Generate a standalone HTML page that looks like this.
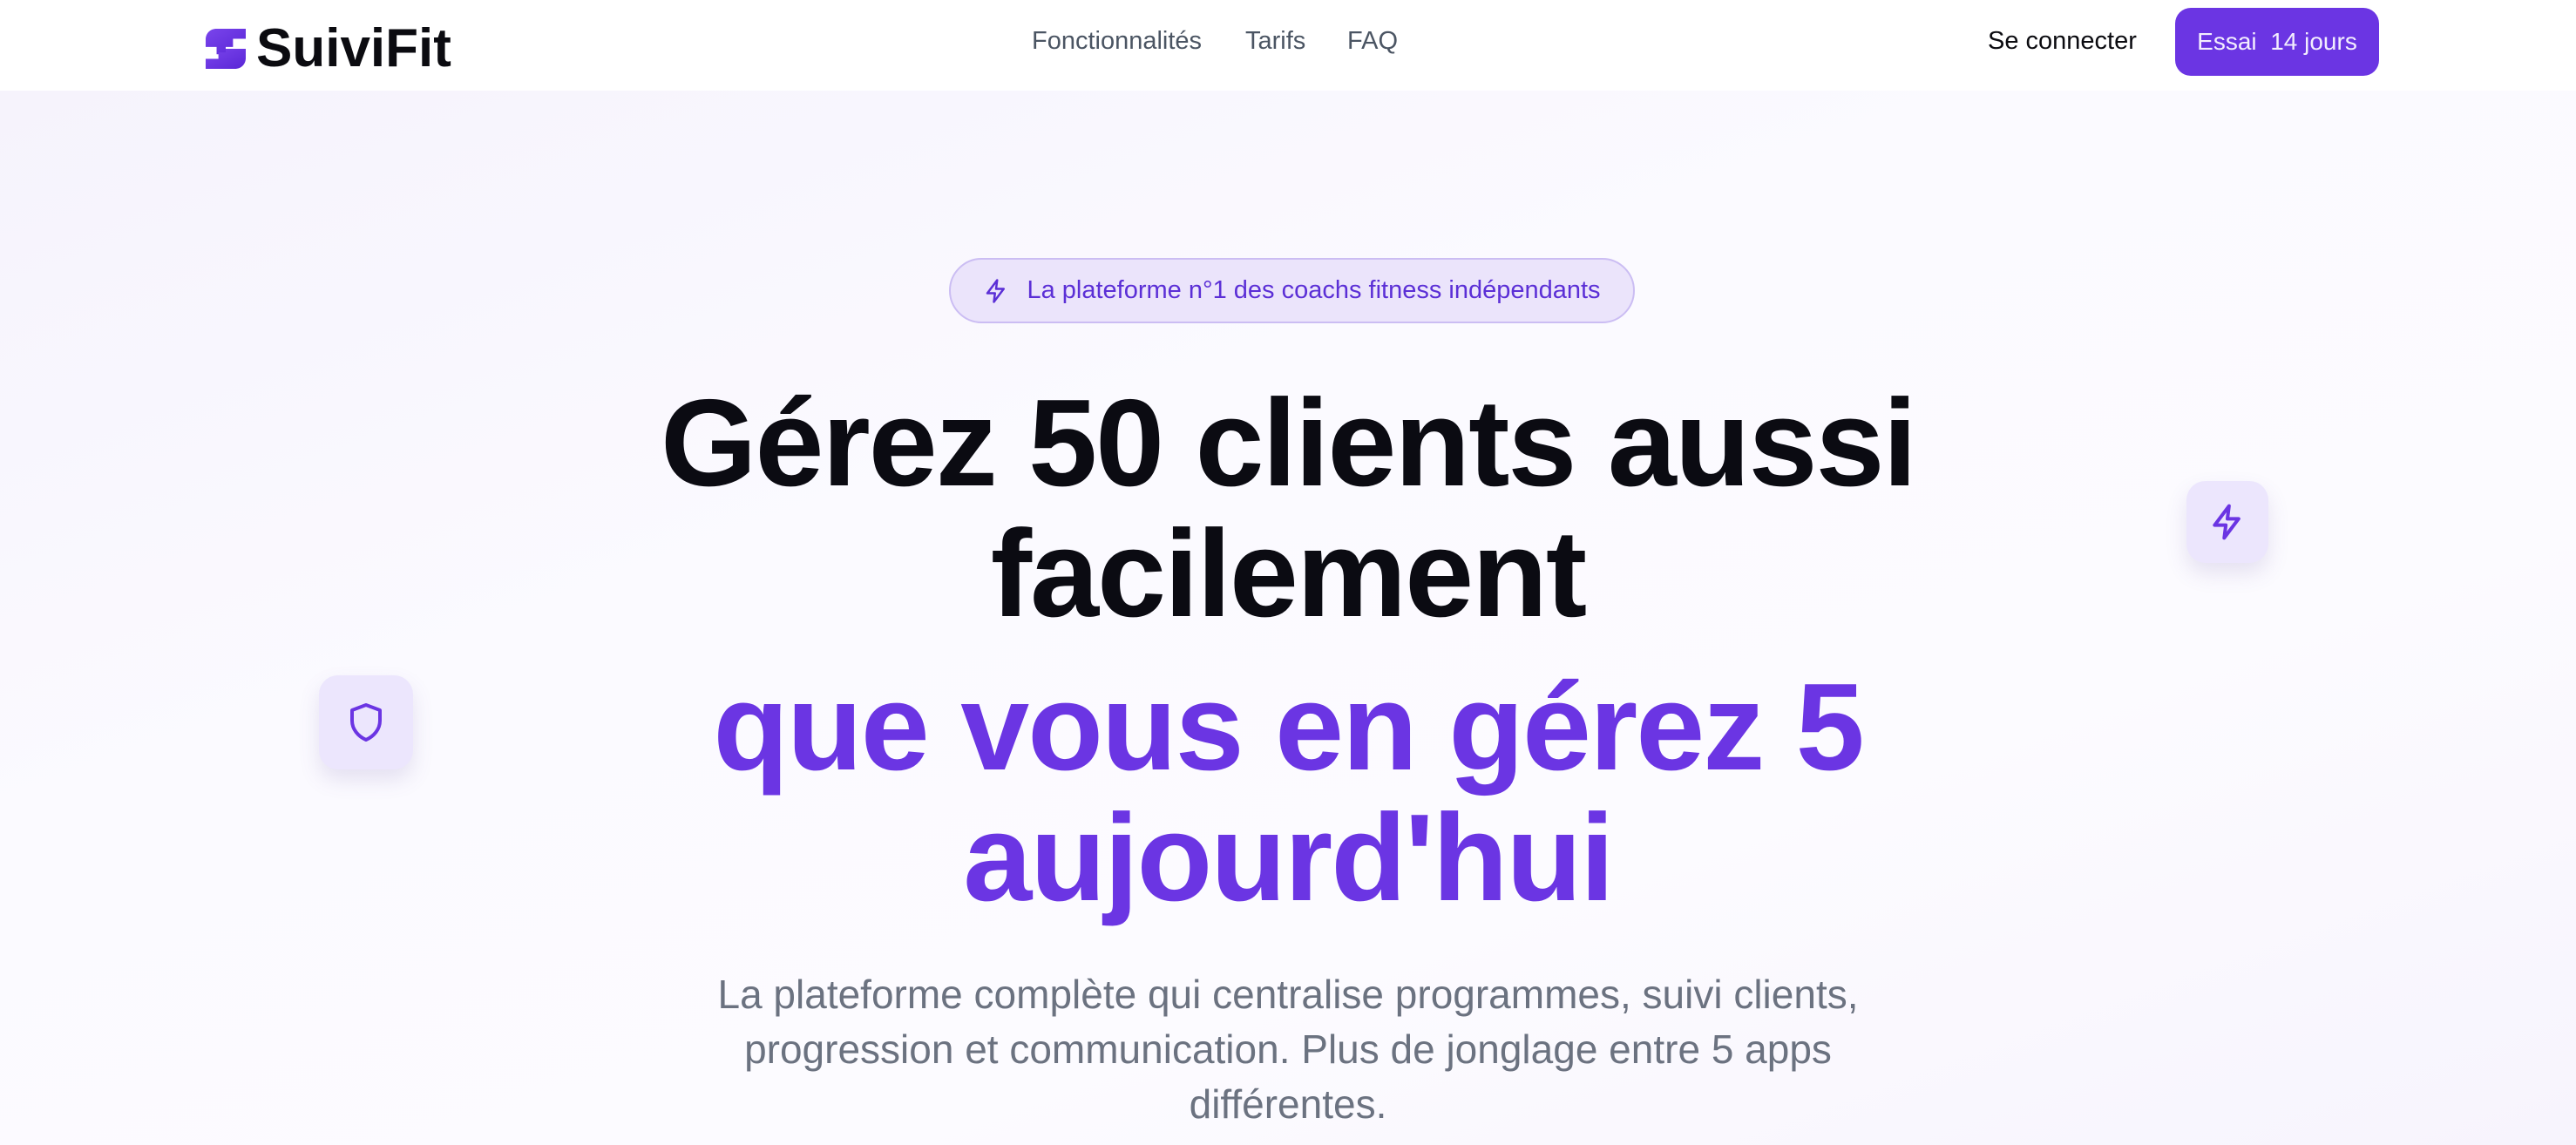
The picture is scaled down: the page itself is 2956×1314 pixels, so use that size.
<!DOCTYPE html>
<html><head><meta charset="utf-8">
<style>
*{margin:0;padding:0;box-sizing:border-box}
html,body{width:2956px;height:1314px;overflow:hidden}
body{font-family:"Liberation Sans",sans-serif;position:relative;
background:linear-gradient(160deg,#f5f2fc 0%,#fbfaff 40%,#fcfbff 70%,#f7f4fd 100%);}
.hdr{position:absolute;left:0;top:0;width:2956px;height:104px;background:#fff}
.logo{position:absolute;left:236px;top:20px;display:flex;align-items:center}
.logo span{font-weight:700;font-size:62px;color:#0b0b10;margin-left:12px;letter-spacing:0px}
.nav{position:absolute;top:31px;font-size:29px;color:#4b5563}
.btn{position:absolute;left:2496px;top:9px;width:234px;height:78px;background:#6b35e3;border-radius:18px;color:#f3eefe;font-size:28px;display:flex;align-items:center;justify-content:center;white-space:pre}
.badge{position:absolute;left:1089px;top:296px;width:787px;height:75px;border-radius:38px;background:#ebe4fb;border:2px solid #cbbdf3;color:#5b2fd6;font-size:29px;display:flex;align-items:center;justify-content:center;gap:20px}
h1{position:absolute;left:0;width:2956px;text-align:center;font-weight:700;font-size:142px;letter-spacing:-2px;line-height:150px}
.p{position:absolute;left:0;top:1110px;width:2956px;text-align:center;color:#6b7280;font-size:46px;line-height:63px}
.ic{position:absolute;background:#ece6fd;border-radius:22px;box-shadow:0 12px 24px rgba(100,80,160,.15);display:flex;align-items:center;justify-content:center}
</style></head><body>
<div class="hdr">
 <div class="logo">
  <svg width="46" height="46" viewBox="0 0 44 44"><defs><linearGradient id="g" x1="0" y1="0" x2="1" y2="1"><stop offset="0" stop-color="#7a45ec"/><stop offset="1" stop-color="#5a26d6"/></linearGradient></defs>
  <path d="M12 0H44V11H30V20H22V28H12V20H0V12C0 5 5 0 12 0Z" fill="url(#g)"/>
  <path d="M32 22H44V32C44 39 39 44 32 44H0V33H14V26H22V22Z" fill="url(#g)"/></svg>
  <span>SuiviFit</span>
 </div>
 <div class="nav" style="left:1184px">Fonctionnalités</div>
 <div class="nav" style="left:1429px">Tarifs</div>
 <div class="nav" style="left:1546px">FAQ</div>
 <div class="nav" style="left:2281px;color:#0b0b10">Se connecter</div>
 <div class="btn">Essai  14 jours</div>
</div>
<div class="badge"><svg width="30" height="30" viewBox="0 0 24 24" fill="none" stroke="#5b2fd6" stroke-width="2" stroke-linejoin="round" stroke-linecap="round"><path d="M13 2L4 14h7l-1 8 9-12h-7z"/></svg>La plateforme n°1 des coachs fitness indépendants</div>
<h1 style="top:434px;color:#0b0b12">Gérez 50 clients aussi<br>facilement</h1>
<h1 style="top:760px;color:#6b35e3">que vous en gérez 5<br>aujourd'hui</h1>
<div class="p">La plateforme complète qui centralise programmes, suivi clients,<br>progression et communication. Plus de jonglage entre 5 apps<br>différentes.</div>
<div class="ic" style="left:2509px;top:552px;width:94px;height:94px"><svg width="44" height="44" viewBox="0 0 24 24" fill="none" stroke="#6b35e3" stroke-width="2.2" stroke-linejoin="round" stroke-linecap="round"><path d="M13 2L4 14h7l-1 8 9-12h-7z"/></svg></div>
<div class="ic" style="left:366px;top:775px;width:108px;height:108px"><svg width="48" height="48" viewBox="0 0 24 24" fill="none" stroke="#6b35e3" stroke-width="2" stroke-linejoin="round"><path d="M12 2l8 3v6c0 5-3.5 9-8 11-4.5-2-8-6-8-11V5z"/></svg></div>
</body></html>
